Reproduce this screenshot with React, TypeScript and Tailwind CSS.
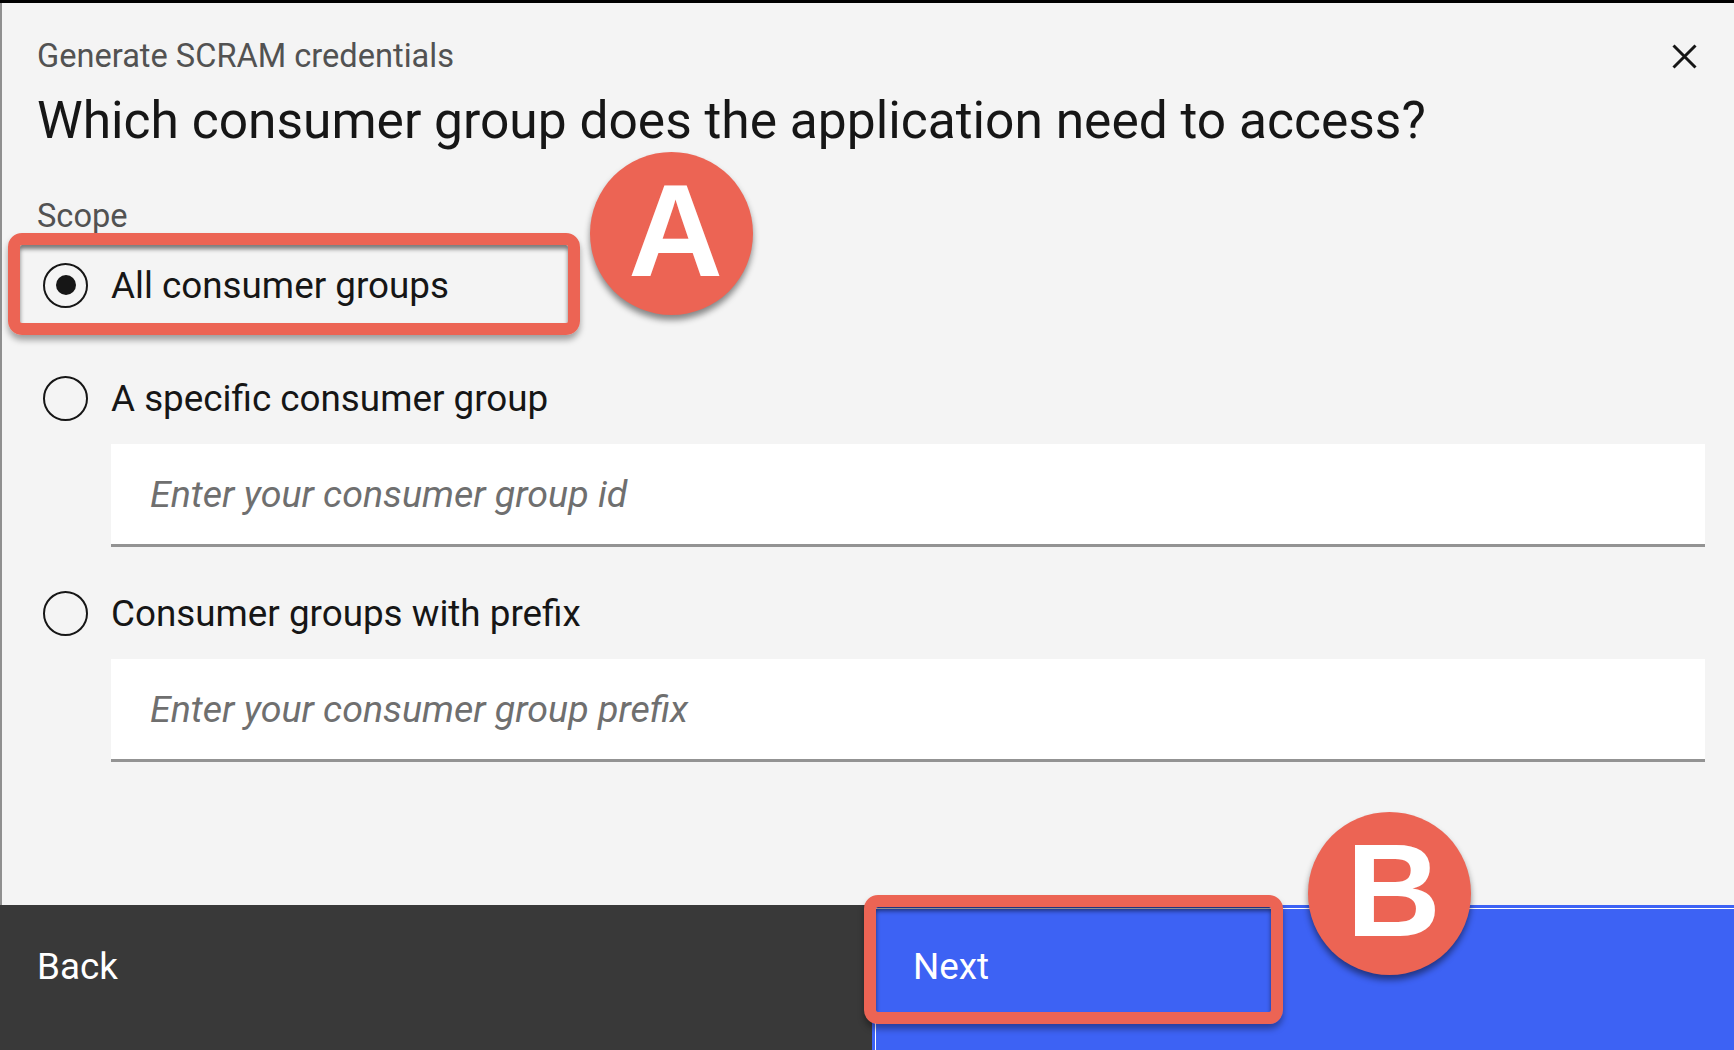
import React from 'react';

const Radio = ({ checked, label }: { checked?: boolean; label: string }) => {
  return (
    <div className="flex h-[60px] items-center pl-[41px]">
      <span className="flex h-[45px] w-[45px] items-center justify-center rounded-full border-[2.5px] border-[#161616]">
        {checked && <span className="h-[20px] w-[20px] rounded-full bg-[#161616]" />}
      </span>
      <span className="ml-[23px] text-[36.8px] leading-[43px] text-[#161616]">{label}</span>
    </div>
  );
};

const TextInput = ({ placeholder }: { placeholder: string }) => {
  return (
    <div className="ml-[109px] mr-[29px] flex h-[103px] items-center border-b-[3px] border-[#939393] bg-white pl-[39px]">
      <span className="text-[37.6px] italic leading-[43px] text-[#6f6f6f]">{placeholder}</span>
    </div>
  );
};

const Marker = ({ letter, className }: { letter: string; className: string }) => {
  return (
    <div
      className={
        'absolute flex h-[163px] w-[163px] items-center justify-center rounded-full bg-[#ec6454] shadow-[0_5px_6px_rgba(0,0,0,0.45)] ' +
        className
      }
    >
      <span
        className="pb-[7px] pl-[8px] text-[131px] font-bold leading-none text-white"
        style={{ fontFamily: '"Liberation Sans", Arial, sans-serif' }}
      >
        {letter}
      </span>
    </div>
  );
};

export default function App() {
  return (
    <div
      className="relative flex h-[1050px] w-full flex-col overflow-hidden border-t-[3px] border-black bg-[#f4f4f4]"
      style={{ fontFamily: 'Roboto, "Noto Sans", sans-serif' }}
    >
      <div className="flex flex-1 flex-col border-l-2 border-[#8f8f8f]">
        <div className="pl-[35px] pt-[34px]">
          <div className="text-[32.6px] leading-[38px] text-[#525252]">Generate SCRAM credentials</div>
          <h2 className="mt-[15px] text-[51.5px] leading-[62px] text-[#161616]">
            Which consumer group does the application need to access?
          </h2>
          <div className="mt-[45px] text-[32.6px] leading-[38px] text-[#525252]">Scope</div>
        </div>

        <div className="mt-[20px]">
          <Radio checked label="All consumer groups" />
        </div>
        <div className="mt-[53px]">
          <Radio label="A specific consumer group" />
        </div>
        <div className="mt-[16px]">
          <TextInput placeholder="Enter your consumer group id" />
        </div>
        <div className="mt-[36px]">
          <Radio label="Consumer groups with prefix" />
        </div>
        <div className="mt-[16px]">
          <TextInput placeholder="Enter your consumer group prefix" />
        </div>
      </div>

      <div className="flex h-[145px]">
        <button className="flex w-[872px] items-start bg-[#393939] pl-[37px] pt-[40px] text-left text-[36.8px] leading-[43px] text-white">
          Back
        </button>
        <button className="flex flex-1 items-start border-l-[3px] border-t-[3px] border-[#3d62f4] bg-[#3d62f4] pl-[38px] pt-[37px] text-left text-[36.8px] leading-[43px] text-white shadow-[inset_1px_1px_0_0_#ffffff]">
          Next
        </button>
      </div>

      <button className="absolute left-[1672px] top-[41px] h-[25px] w-[25px]" aria-label="Close">
        <svg viewBox="0 0 25 25" className="h-[25px] w-[25px]">
          <path d="M1.5 1.5 L23.5 23.5 M23.5 1.5 L1.5 23.5" stroke="#161616" strokeWidth="3" fill="none" />
        </svg>
      </button>

      <div className="absolute left-[8px] top-[230px] h-[102px] w-[572px] rounded-[14px] border-[12px] border-[#ec6454] shadow-[0_5px_6px_rgba(0,0,0,0.35),inset_0_4px_4px_rgba(0,0,0,0.5)]" />
      <Marker letter="A" className="left-[590px] top-[149px]" />

      <div className="absolute left-[864px] top-[892px] h-[129px] w-[419px] rounded-[14px] border-[12px] border-[#ec6454] shadow-[0_5px_6px_rgba(0,0,0,0.35),inset_0_4px_4px_rgba(0,0,0,0.5)]" />
      <Marker letter="B" className="left-[1308px] top-[809px]" />
    </div>
  );
}
